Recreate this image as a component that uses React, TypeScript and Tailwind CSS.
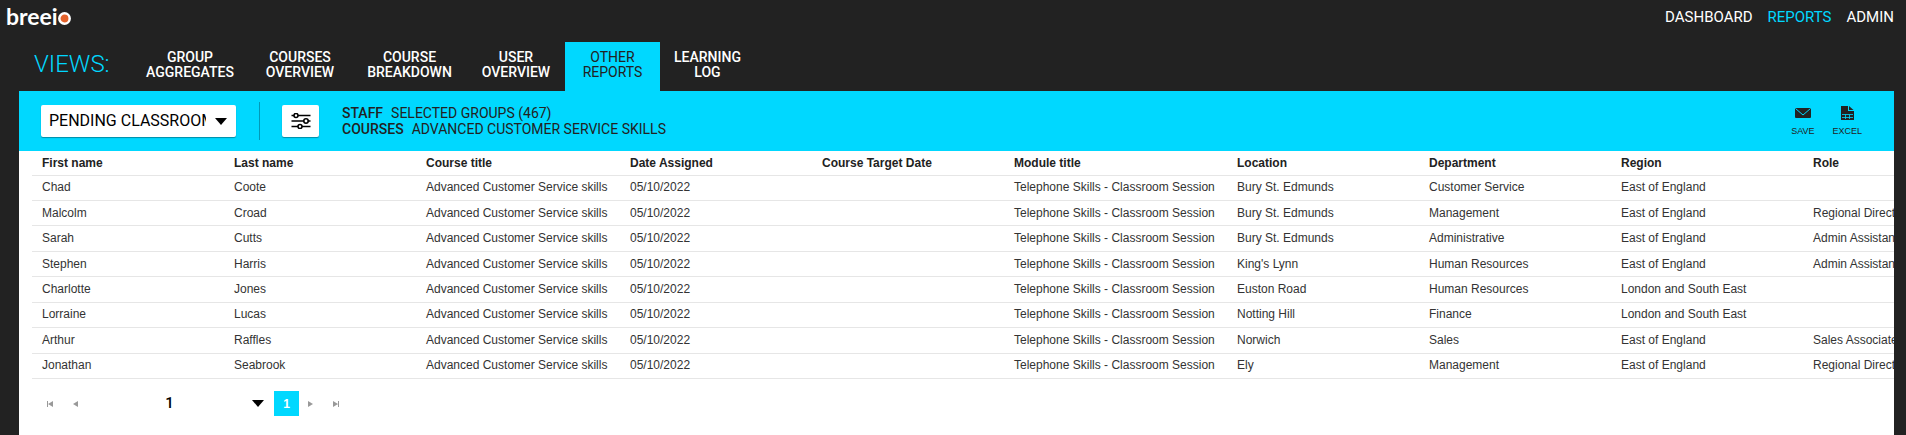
const views = [
  { lines: ["GROUP", "AGGREGATES"], width: "w-[116px]" },
  { lines: ["COURSES", "OVERVIEW"], width: "w-[104px]" },
  { lines: ["COURSE", "BREAKDOWN"], width: "w-[115px]" },
  { lines: ["USER", "OVERVIEW"], width: "w-[98px]" },
  { lines: ["OTHER", "REPORTS"], width: "w-[95px]", active: true },
  { lines: ["LEARNING", "LOG"], width: "w-[95px]" },
];

const columns = [
  { title: "First name", width: "w-[192px]" },
  { title: "Last name", width: "w-[192px]" },
  { title: "Course title", width: "w-[204px]" },
  { title: "Date Assigned", width: "w-[192px]" },
  { title: "Course Target Date", width: "w-[192px]" },
  { title: "Module title", width: "w-[223px]" },
  { title: "Location", width: "w-[192px]" },
  { title: "Department", width: "w-[192px]" },
  { title: "Region", width: "w-[192px]" },
  { title: "Role", width: "w-[192px]" },
];

const course = "Advanced Customer Service skills";
const session = "Telephone Skills - Classroom Session";

const learners = [
  ["Chad", "Coote", "Bury St. Edmunds", "Customer Service", "East of England", ""],
  ["Malcolm", "Croad", "Bury St. Edmunds", "Management", "East of England", "Regional Director"],
  ["Sarah", "Cutts", "Bury St. Edmunds", "Administrative", "East of England", "Admin Assistant"],
  ["Stephen", "Harris", "King's Lynn", "Human Resources", "East of England", "Admin Assistant"],
  ["Charlotte", "Jones", "Euston Road", "Human Resources", "London and South East", ""],
  ["Lorraine", "Lucas", "Notting Hill", "Finance", "London and South East", ""],
  ["Arthur", "Raffles", "Norwich", "Sales", "East of England", "Sales Associate"],
  ["Jonathan", "Seabrook", "Ely", "Management", "East of England", "Regional Director"],
];

const Logo = () => (
  <a href="#" aria-label="breeio" className="flex h-7 items-baseline text-white">
    <span className="font-['Lato',sans-serif] text-[23px] leading-8 font-bold">breei</span>
    <svg viewBox="0 0 13 13" className="size-[13px]">
      <circle cx="6.500" cy="6.500" r="5.200" fill="#e4622b" stroke="white" strokeWidth="2.500" />
    </svg>
  </a>
);

const Header = () => (
  <header className="flex items-start justify-between pr-3 pl-[6px]">
    <Logo />
    <nav className="flex gap-[15px] pt-[7px] font-['Roboto',sans-serif] text-[15px] leading-5 text-white">
      <a href="#">DASHBOARD</a>
      <a href="#" className="text-[#00d8ff]">REPORTS</a>
      <a href="#">ADMIN</a>
    </nav>
  </header>
);

const ViewTabs = () => (
  <div className="mt-[14px] flex h-[49px] pl-[34px] font-['Roboto',sans-serif]">
    <h2 className="w-[98px] pt-2 text-[24px] leading-7 font-light text-[#00d8ff]">VIEWS:</h2>
    <nav className="flex text-center text-[14px] leading-[15px] font-medium text-white">
      {views.map((view) => (
        <a
          key={view.lines.join(" ")}
          href="#"
          className={`${view.width} pt-2 ${view.active ? "bg-[#00d8ff] font-normal text-[#222222]" : ""}`}
        >
          {view.lines[0]}
          <br />
          {view.lines[1]}
        </a>
      ))}
    </nav>
  </div>
);

const SlidersIcon = () => (
  <svg viewBox="0 0 20 16" className="h-4 w-5" fill="white" stroke="black" strokeWidth="1.6">
    <path d="M0.500 2.500H19.500M0.500 8H19.500M0.500 13.500H19.500" />
    <circle cx="5" cy="2.500" r="2" />
    <circle cx="15" cy="8" r="2.200" />
    <circle cx="9" cy="13.500" r="2" />
  </svg>
);

const EnvelopeIcon = () => (
  <svg viewBox="0 0 16 10" className="h-[10px] w-4">
    <rect width="16" height="10" rx="1" fill="#222222" />
    <path d="M0.500 0.500L8 7L15.500 0.500" fill="none" stroke="#00d8ff" />
  </svg>
);

const SpreadsheetIcon = () => (
  <svg viewBox="0 0 13 14" className="h-[14px] w-[13px]">
    <path d="M0 0H7V5H13V14H0ZM8 0L12.500 4H8Z" fill="#222222" />
    <path d="M1 8.500H12M1 11.500H12M4.500 8.500V13M8.500 8.500V13" stroke="#00d8ff" strokeWidth="0.800" />
  </svg>
);

const Toolbar = () => (
  <div className="flex h-[60px] items-start bg-[#00d8ff] pr-8 pl-[22px] text-[#222222]">
    <div className="relative mt-[14px]">
      <select
        aria-label="Report"
        defaultValue="pending"
        className="h-8 w-[195px] appearance-none rounded-[2px] border-r-[30px] border-white bg-white pl-2 font-['Roboto',sans-serif] text-[16px] text-black shadow-[0_1px_1px_rgba(0,0,0,0.35)]"
      >
        <option value="pending">PENDING CLASSROOM</option>
      </select>
      <svg viewBox="0 0 12 7" className="pointer-events-none absolute top-[13px] right-[9px] h-[7px] w-3">
        <path d="M0 0H12L6 7Z" />
      </svg>
    </div>
    <div className="mt-[11px] ml-[23px] h-[38px] w-px bg-[#0099b8]" />
    <button
      aria-label="Filters"
      className="mt-[14px] ml-[22px] flex h-8 w-[37px] items-center justify-center rounded-[2px] bg-white shadow-[0_1px_1px_rgba(0,0,0,0.35)]"
    >
      <SlidersIcon />
    </button>
    <div className="mt-[14px] ml-[23px] font-['Roboto',sans-serif] text-[14px] leading-4">
      <p>
        <span className="mr-2 font-medium">STAFF</span>SELECTED GROUPS (467)
      </p>
      <p>
        <span className="mr-2 font-medium">COURSES</span>ADVANCED CUSTOMER SERVICE SKILLS
      </p>
    </div>
    <div className="mt-[15px] ml-auto flex gap-[18px] text-[9px] leading-3">
      <button className="flex flex-col items-center gap-[5px]">
        <span className="flex h-[14px] items-center"><EnvelopeIcon /></span>
        SAVE
      </button>
      <button className="flex flex-col items-center gap-[5px]">
        <SpreadsheetIcon />
        EXCEL
      </button>
    </div>
  </div>
);

const ReportTable = () => (
  <div className="overflow-hidden pl-[13px]">
    <table className="h-[228px] w-[1963px] table-fixed text-left text-[12px] leading-4 whitespace-nowrap text-[#333333]">
      <thead>
        <tr className="h-6 border-b border-[#e6e6e6] text-[#222222]">
          {columns.map((column) => (
            <th key={column.title} scope="col" className={`${column.width} pl-[10px] font-bold`}>
              {column.title}
            </th>
          ))}
        </tr>
      </thead>
      <tbody>
        {learners.map(([first, last, location, department, region, role]) => (
          <tr key={first} className="border-b border-[#e6e6e6]">
            {[first, last, course, "05/10/2022", "", session, location, department, region, role].map((value, i) => (
              <td key={i} className="pb-px pl-[10px]">{value}</td>
            ))}
          </tr>
        ))}
      </tbody>
    </table>
  </div>
);

const Pager = () => (
  <div className="flex items-center pt-3 pb-[22px] pl-[28px]">
    <button aria-label="First page" className="flex w-[26px]">
      <svg viewBox="0 0 6 6" className="size-[6px]" fill="#999999"><path d="M0 0H1V6H0ZM6 0V6L1 3Z" /></svg>
    </button>
    <button aria-label="Previous page" className="flex w-[26px]">
      <svg viewBox="0 0 5 6" className="h-[6px] w-[5px]" fill="#999999"><path d="M5 0V6L0 3Z" /></svg>
    </button>
    <div className="relative">
      <select
        aria-label="Page"
        className="h-[25px] w-[175px] appearance-none bg-white pr-[34px] text-center font-['Roboto',sans-serif] text-[15px] font-medium text-black"
      >
        <option>1</option>
      </select>
      <svg viewBox="0 0 12 7" className="pointer-events-none absolute top-[9px] right-[10px] h-[7px] w-3">
        <path d="M0 0H12L6 7Z" />
      </svg>
    </div>
    <button aria-current="page" className="size-[25px] bg-[#00d8ff] text-[12px] font-bold text-white">1</button>
    <button aria-label="Next page" className="ml-[9px] flex w-[25px]">
      <svg viewBox="0 0 5 6" className="h-[6px] w-[5px]" fill="#999999"><path d="M0 0V6L5 3Z" /></svg>
    </button>
    <button aria-label="Last page" className="flex">
      <svg viewBox="0 0 6 6" className="size-[6px]" fill="#999999"><path d="M5 0H6V6H5ZM0 0V6L5 3Z" /></svg>
    </button>
  </div>
);

const App = () => {
  return (
    <div className="flex min-h-screen flex-col bg-[#222222] font-['Liberation_Sans',Arial,sans-serif]">
      <Header />
      <ViewTabs />
      <main className="mr-3 ml-[19px] grow bg-white">
        <Toolbar />
        <ReportTable />
        <Pager />
      </main>
    </div>
  );
};

export default App;
